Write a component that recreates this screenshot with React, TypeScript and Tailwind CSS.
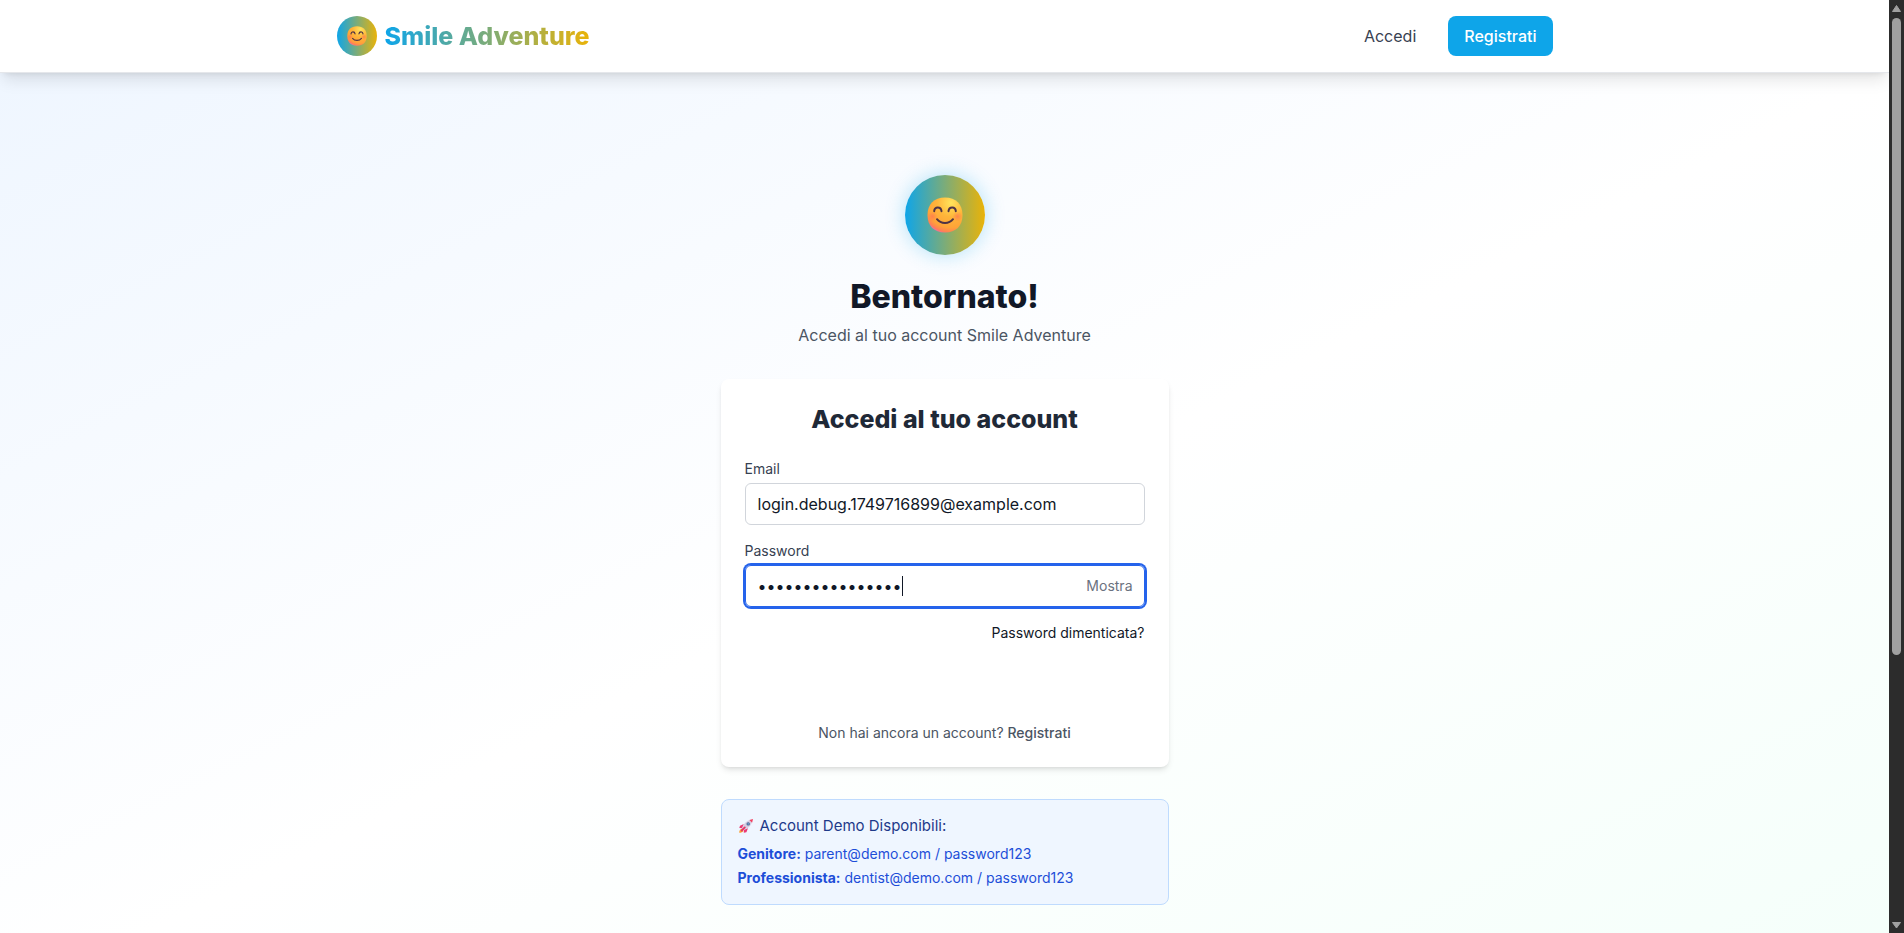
import { useState } from 'react';

function SmileFace({ className, id }: { className: string; id: string }) {
  return (
    <svg viewBox="0 0 36 36" className={className} aria-hidden="true">
      <defs>
        <radialGradient id={`${id}-base`} cx="24" cy="6" r="31" gradientUnits="userSpaceOnUse">
          <stop offset="0" stopColor="#ffe45c" />
          <stop offset="0.45" stopColor="#ffb53a" />
          <stop offset="0.8" stopColor="#ffa338" />
          <stop offset="0.95" stopColor="#ff7f56" />
          <stop offset="1" stopColor="#f0709a" />
        </radialGradient>
        <radialGradient id={`${id}-cheek`}>
          <stop offset="0" stopColor="#ff6a58" stopOpacity="0.6" />
          <stop offset="1" stopColor="#ff6a58" stopOpacity="0" />
        </radialGradient>
      </defs>
      <path
        d="M18 .5C29 .5 35.500 7 35.500 18S29 35.500 18 35.500.5 29 .5 18 7 .5 18 .5Z"
        fill={`url(#${id}-base)`}
      />
      <circle cx="5.500" cy="19.500" r="5" fill={`url(#${id}-cheek)`} />
      <circle cx="30.500" cy="19.500" r="5" fill={`url(#${id}-cheek)`} />
      <g fill="none" stroke="#4f3345" strokeWidth="2" strokeLinecap="round">
        <path d="M7.200 14.200c.4-4.800 6.700-4.800 7.300 0" />
        <path d="M21.500 14.200c.6-4.800 6.900-4.800 7.300 0" />
        <path d="M10 22.200c3.800 5 12.200 5 16 0" />
      </g>
    </svg>
  );
}

function Rocket() {
  return (
    <svg viewBox="0 0 16 16" className="h-4 w-4" aria-hidden="true">
      <path d="M1.200 14.800c0-2 .8-3.600 2.300-4l2 2c-.5 1.500-2.300 2-4.300 2Z" fill="#fba53b" />
      <path d="M5.800 6 2 7.700 1.300 10l3 .2ZM10 10.200l-1.600 4-2.600.6.1-3.200Z" fill="#ec3b75" />
      <path d="M4 10.500C5.200 6 8.500 2.600 13 1.800l1.300 1.300C13.400 7.500 10 11 5.500 12Z" fill="#d5cfe3" />
      <path d="M11.400 1.900 15 1l-.9 3.700Z" fill="#f43f5e" />
      <path d="M3.700 12.500 6.800 9.400" stroke="#e43465" strokeWidth="1.800" strokeLinecap="round" />
      <circle cx="10.200" cy="5.900" r="1.700" fill="#48628f" />
      <circle cx="10.200" cy="5.900" r=".8" fill="#6fa5d8" />
    </svg>
  );
}

function ScrollRail() {
  return (
    <div className="flex w-[15px] shrink-0 flex-col items-center bg-[#2c2c2c]" aria-hidden="true">
      <svg viewBox="0 0 15 18" className="h-[18px] w-[15px]">
        <path d="M7.500 5.500 11.500 11.500h-8Z" fill="#a0a0a0" stroke="#a0a0a0" strokeLinejoin="round" />
      </svg>
      <div className="flex w-[9px] flex-1 flex-col">
        <div className="h-[71%] rounded-full bg-[#a0a0a0]" />
      </div>
      <svg viewBox="0 0 15 18" className="h-[18px] w-[15px]">
        <path d="M7.500 13 11.500 7.500h-8Z" fill="#a0a0a0" stroke="#a0a0a0" strokeLinejoin="round" />
      </svg>
    </div>
  );
}

function Header() {
  return (
    <header className="relative z-10 border-b border-[#e5e7eb] bg-white shadow-[0_10px_15px_-3px_rgba(0,0,0,0.1),0_4px_6px_-4px_rgba(0,0,0,0.1)]">
      <div className="mx-auto flex max-w-7xl items-center justify-between px-8 py-4">
        <a href="#home" className="flex items-center gap-2">
          <span className="flex h-10 w-10 items-center justify-center rounded-full bg-linear-to-r/srgb from-[#0ea5e9] to-[#eab308]">
            <SmileFace id="logo" className="h-5 w-5" />
          </span>
          <span className="bg-linear-to-r/srgb from-[#0ea5e9] to-[#eab308] bg-clip-text text-[25px] leading-8 font-extrabold text-transparent">
            Smile Adventure
          </span>
        </a>
        <nav className="flex items-center gap-8">
          <a href="#accedi" className="text-[#374151]">
            Accedi
          </a>
          <a href="#registrati" className="rounded-lg bg-[#0ea5e9] px-4 py-2 font-medium text-white">
            Registrati
          </a>
        </nav>
      </div>
    </header>
  );
}

function LoginCard() {
  const [email, setEmail] = useState('login.debug.1749716899@example.com');
  const [password, setPassword] = useState('Password12345678');
  const [visible, setVisible] = useState(false);

  return (
    <form
      onSubmit={(event) => event.preventDefault()}
      className="mt-8 rounded-lg bg-white p-6 shadow-[0_4px_6px_-1px_rgba(0,0,0,0.1),0_2px_4px_-2px_rgba(0,0,0,0.1)]"
    >
      <h2 className="text-center text-[25px] leading-8 font-extrabold text-[#1f2937]">Accedi al tuo account</h2>

      <label htmlFor="email" className="mt-6 mb-1 block text-sm text-[#374151]">
        Email
      </label>
      <input
        id="email"
        type="email"
        value={email}
        onChange={(event) => setEmail(event.target.value)}
        className="block w-full rounded-md border border-[#d1d5db] px-3 py-2 text-base text-[#111827] outline-none"
      />

      <label htmlFor="password" className="mt-4 mb-1 block text-sm text-[#374151]">
        Password
      </label>
      <div className="relative">
        <input
          id="password"
          type={visible ? 'text' : 'password'}
          value={password}
          onChange={(event) => setPassword(event.target.value)}
          className="block w-full rounded-md border border-[#2563eb] py-2 pr-20 pl-3 text-base text-[#111827] ring-2 ring-[#2563eb] outline-none"
        />
        <span className="absolute top-[11px] left-[157px] h-5 w-px bg-[#111827]" aria-hidden="true" />
        <button
          type="button"
          onClick={() => setVisible(!visible)}
          className="absolute inset-y-0 right-0 px-3 text-sm text-[#6b7280]"
        >
          Mostra
        </button>
      </div>

      <div className="mt-4 flex justify-end text-sm text-[#111827]">
        <a href="#recupero">Password dimenticata?</a>
      </div>

      <p className="mt-20 text-center text-sm text-[#4b5563]">
        Non hai ancora un account?{' '}
        <a href="#registrati" className="font-medium">
          Registrati
        </a>
      </p>
    </form>
  );
}

function DemoAccounts() {
  return (
    <section className="mt-8 rounded-lg border border-[#bfdbfe] bg-[#eff6ff] p-4 text-sm text-[#1d4ed8]">
      <h3 className="mb-2 flex items-center gap-1.5 text-[15px] leading-5 text-[#1e3a8a]">
        <Rocket />
        Account Demo Disponibili:
      </h3>
      <div className="space-y-1">
        <p>
          <strong className="font-bold">Genitore:</strong> parent@demo.com / password123
        </p>
        <p>
          <strong className="font-bold">Professionista:</strong> dentist@demo.com / password123
        </p>
      </div>
    </section>
  );
}

export default function App() {
  return (
    <div className="flex h-screen overflow-hidden bg-white font-['Inter',sans-serif] text-base">
      <div className="min-w-0 flex-1 overflow-hidden">
        <Header />
        <main className="flex min-h-screen items-center justify-center bg-linear-to-br/srgb from-[#eff6ff] via-white to-[#f4fffa] px-4 py-12">
          <div className="w-full max-w-md">
            <div className="mx-auto flex h-20 w-20 items-center justify-center rounded-full bg-linear-to-r/srgb from-[#0ea5e9] to-[#eab308] shadow-[0_0_20px_rgba(14,165,233,0.3)]">
              <SmileFace id="hero" className="h-9 w-9" />
            </div>
            <h1 className="mt-6 text-center text-[32px] leading-9 font-extrabold text-[#111827]">Bentornato!</h1>
            <p className="mt-2 text-center text-[#4b5563]">Accedi al tuo account Smile Adventure</p>
            <LoginCard />
            <DemoAccounts />
          </div>
        </main>
      </div>
      <ScrollRail />
    </div>
  );
}
